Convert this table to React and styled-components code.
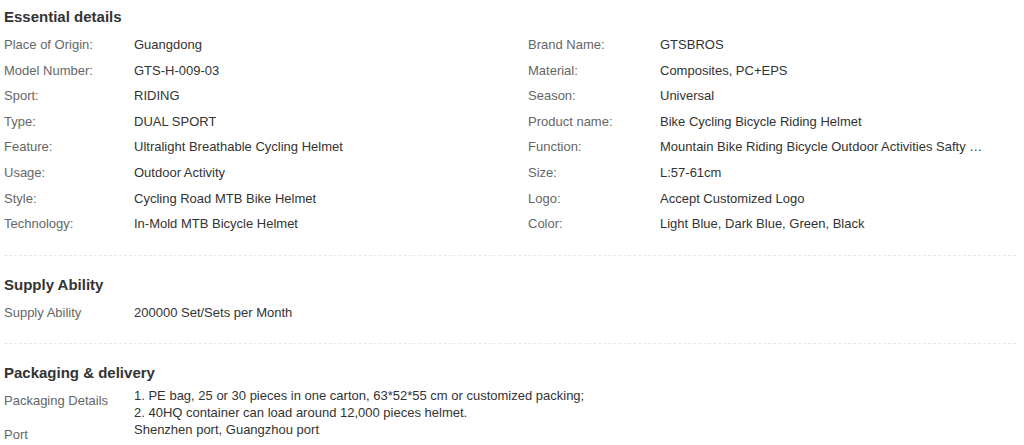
import React from "react";
import styled, { createGlobalStyle } from "styled-components";

const essential = [
  ["Place of Origin:", "Guangdong", "Brand Name:", "GTSBROS"],
  ["Model Number:", "GTS-H-009-03", "Material:", "Composites, PC+EPS"],
  ["Sport:", "RIDING", "Season:", "Universal"],
  ["Type:", "DUAL SPORT", "Product name:", "Bike Cycling Bicycle Riding Helmet"],
  [
    "Feature:",
    "Ultralight Breathable Cycling Helmet",
    "Function:",
    "Mountain Bike Riding Bicycle Outdoor Activities Safty Helmet For Adult",
  ],
  ["Usage:", "Outdoor Activity", "Size:", "L:57-61cm"],
  ["Style:", "Cycling Road MTB Bike Helmet", "Logo:", "Accept Customized Logo"],
  ["Technology:", "In-Mold MTB Bicycle Helmet", "Color:", "Light Blue, Dark Blue, Green, Black"],
];

export default function App() {
  return (
    <Wrapper>
      <GlobalStyle />
      <Section>
        <Title $gap="5px">Essential details</Title>
        <Grid>
          {essential.map((row) => (
            <React.Fragment key={row[0]}>
              <Item>
                <Label $width="130px">{row[0]}</Label>
                <Value>{row[1]}</Value>
              </Item>
              <Item>
                <Label $width="132px">{row[2]}</Label>
                <Value>{row[3]}</Value>
              </Item>
            </React.Fragment>
          ))}
        </Grid>
      </Section>
      <Divider />
      <Section>
        <Title $gap="5px">Supply Ability</Title>
        <Item>
          <Label $width="130px">Supply Ability</Label>
          <Value>200000 Set/Sets per Month</Value>
        </Item>
      </Section>
      <Divider />
      <Section>
        <Title $gap="4px">Packaging &amp; delivery</Title>
        <DetailRow>
          <DetailLabel $pad="5px">Packaging Details</DetailLabel>
          <DetailValue>
            1. PE bag, 25 or 30 pieces in one carton, 63*52*55 cm or customized packing;
            <br />
            2. 40HQ container can load around 12,000 pieces helmet.
          </DetailValue>
        </DetailRow>
        <DetailRow>
          <DetailLabel $pad="4.5px">Port</DetailLabel>
          <DetailValue>Shenzhen port, Guangzhou port</DetailValue>
        </DetailRow>
      </Section>
    </Wrapper>
  );
}

const GlobalStyle = createGlobalStyle`
  body {
    margin: 0;
    background: #fff;
    font-family: "Liberation Sans", Arial, sans-serif;
  }
`;

const Wrapper = styled.div`
  width: 1012px;
  padding: 7px 0 0 4px;
`;

const Section = styled.section`
  display: flex;
  flex-direction: column;
`;

const Title = styled.h3`
  margin: 0 0 ${(p) => p.$gap};
  font-size: 15px;
  line-height: 20px;
  font-weight: 700;
  color: #333;
`;

const Grid = styled.div`
  display: grid;
  grid-template-columns: 524px 488px;
`;

const Item = styled.div`
  display: flex;
  height: 25.6px;
  align-items: center;
  font-size: 13px;
  line-height: 17.6px;
  min-width: 0;
`;

const Label = styled.span`
  flex: none;
  width: ${(p) => p.$width};
  color: #666;
`;

const Value = styled.span`
  max-width: 326px;
  color: #333;
  white-space: nowrap;
  overflow: hidden;
  text-overflow: ellipsis;
`;

const Divider = styled.hr`
  margin: 18px 0 19px;
  border: 0;
  border-top: 1px dashed #e8e8e8;
`;

const DetailRow = styled.div`
  display: flex;
  font-size: 13px;
  line-height: 17px;
`;

const DetailLabel = styled.div`
  flex: none;
  width: 130px;
  padding-top: ${(p) => p.$pad};
  color: #666;
`;

const DetailValue = styled.div`
  color: #333;
`;
